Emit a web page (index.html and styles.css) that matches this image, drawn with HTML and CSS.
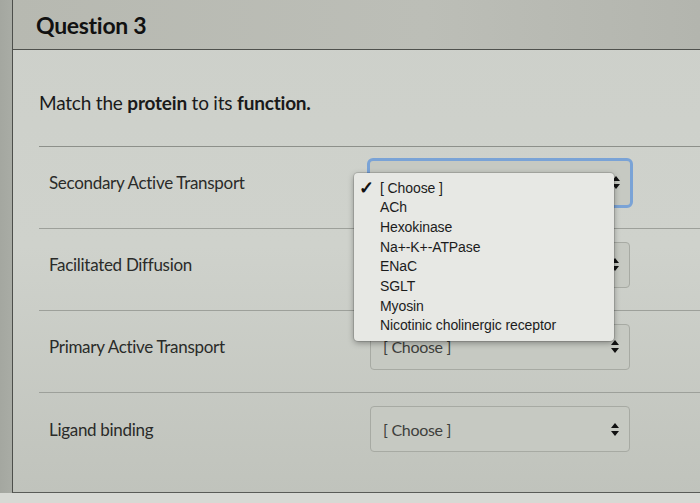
FILE: index.html
```html
<!DOCTYPE html>
<html>
<head>
<meta charset="utf-8">
<link rel="stylesheet" href="styles.css">
</head>
<body>
<div class="page">
  <div class="card">
    <div class="header">Question 3</div>
    <div class="content">
      <p class="prompt">Match the <b>protein</b> to its <b>function.</b></p>
      <div class="rows">
        <div class="row">
          <div class="label">Secondary Active Transport</div>
          <div class="select focused">
            <span class="arrows"><svg width="8" height="13" viewBox="0 0 8 13"><path d="M4 0 L8 5 L0 5 Z M0 8 L8 8 L4 13 Z" fill="#111"/></svg></span>
            <div class="menu">
              <div class="item checked"><span class="check">✓</span>[ Choose ]</div>
              <div class="item">ACh</div>
              <div class="item">Hexokinase</div>
              <div class="item">Na+-K+-ATPase</div>
              <div class="item">ENaC</div>
              <div class="item">SGLT</div>
              <div class="item">Myosin</div>
              <div class="item">Nicotinic cholinergic receptor</div>
            </div>
          </div>
        </div>
        <div class="row">
          <div class="label">Facilitated Diffusion</div>
          <div class="select">
            <span class="value"></span>
            <span class="arrows"><svg width="8" height="13" viewBox="0 0 8 13"><path d="M4 0 L8 5 L0 5 Z M0 8 L8 8 L4 13 Z" fill="#111"/></svg></span>
          </div>
        </div>
        <div class="row">
          <div class="label">Primary Active Transport</div>
          <div class="select">
            <span class="value">[ Choose ]</span>
            <span class="arrows"><svg width="8" height="13" viewBox="0 0 8 13"><path d="M4 0 L8 5 L0 5 Z M0 8 L8 8 L4 13 Z" fill="#111"/></svg></span>
          </div>
        </div>
        <div class="row">
          <div class="label">Ligand binding</div>
          <div class="select">
            <span class="value">[ Choose ]</span>
            <span class="arrows"><svg width="8" height="13" viewBox="0 0 8 13"><path d="M4 0 L8 5 L0 5 Z M0 8 L8 8 L4 13 Z" fill="#111"/></svg></span>
          </div>
        </div>
      </div>
    </div>
  </div>
  <div class="footer-strip"></div>
</div>
</body>
</html>
```

FILE: styles.css
```css
html, body {
  margin: 0;
  padding: 0;
}
body {
  width: 700px;
  height: 503px;
  overflow: hidden;
  background: #aeb1aa;
  font-family: Lato, "Open Sans", sans-serif;
  color: #1e1f1d;
}
.page {
  display: flex;
  flex-direction: column;
  height: 503px;
  background: linear-gradient(90deg, #a4a7a0 0, #a9aca5 12px, transparent 12px);
}
.card {
  margin-left: 12px;
  height: 493px;
  box-sizing: border-box;
  border-left: 1px solid #4d4f4b;
  border-bottom: 1px solid #5a5c58;
  background: linear-gradient(180deg, #cdd0ca 0, #cfd2cc 50%, #c0c3bc 100%);
}
.header {
  height: 49px;
  border-bottom: 1px solid #4f514d;
  background: linear-gradient(90deg, #b7b9b1, #bcbeb7 60%, #b3b5ae);
  display: flex;
  align-items: center;
  padding-left: 23px;
  font-size: 23px;
  font-weight: 700;
  color: #111;
  letter-spacing: -0.3px;
}
.content {
  padding-left: 26px;
}
.prompt {
  margin: 0;
  padding-top: 43px;
  height: 53px;
  line-height: 20px;
  font-size: 19px;
  color: #1a1a1a;
  letter-spacing: -0.2px;
}
.prompt b {
  font-weight: 700;
}
.rows {
  border-top: 1px solid #8d908a;
}
.row {
  display: grid;
  grid-template-columns: 331px 260px;
  align-items: center;
  height: 82px;
  box-sizing: border-box;
  padding-bottom: 10px;
  border-bottom: 1px solid #9da09a;
}
.row:last-child {
  border-bottom: none;
}
.label {
  padding-left: 10px;
  font-size: 17px;
  color: #2a2b29;
  letter-spacing: -0.3px;
}
.select {
  position: relative;
  height: 46px;
  box-sizing: border-box;
  border: 1px solid #a7aaa3;
  border-radius: 4px;
  background: #c6c9c2;
  display: flex;
  align-items: center;
  justify-content: space-between;
  padding: 0 10px 0 12px;
  font-size: 16px;
  color: #3e403c;
  letter-spacing: -0.3px;
}
.select.focused {
  z-index: 10;
  height: 50px;
  margin-left: -3px;
  width: 266px;
  border: 3px solid #7aa3d6;
  border-radius: 6px;
  justify-content: flex-end;
}
.arrows {
  display: flex;
  align-items: center;
}
.menu {
  position: absolute;
  z-index: 20;
  left: -16px;
  top: 12px;
  width: 260px;
  height: 168px;
  box-sizing: border-box;
  background: #e7e8e4;
  border-radius: 4px;
  box-shadow: 0 2px 6px rgba(0,0,0,0.35), 0 0 0 1px rgba(0,0,0,0.12);
  padding: 6px 0 0 26px;
  font-family: "Liberation Sans", Arial, sans-serif;
  font-size: 14px;
  color: #1c1c1c;
  letter-spacing: -0.1px;
}
.item {
  height: 19.7px;
  line-height: 19.7px;
  position: relative;
}
.check {
  position: absolute;
  left: -21px;
  font-size: 18px;
  font-weight: 700;
  color: #111;
}
.footer-strip {
  flex: 1;
  background: #d7d9d4;
}
```
